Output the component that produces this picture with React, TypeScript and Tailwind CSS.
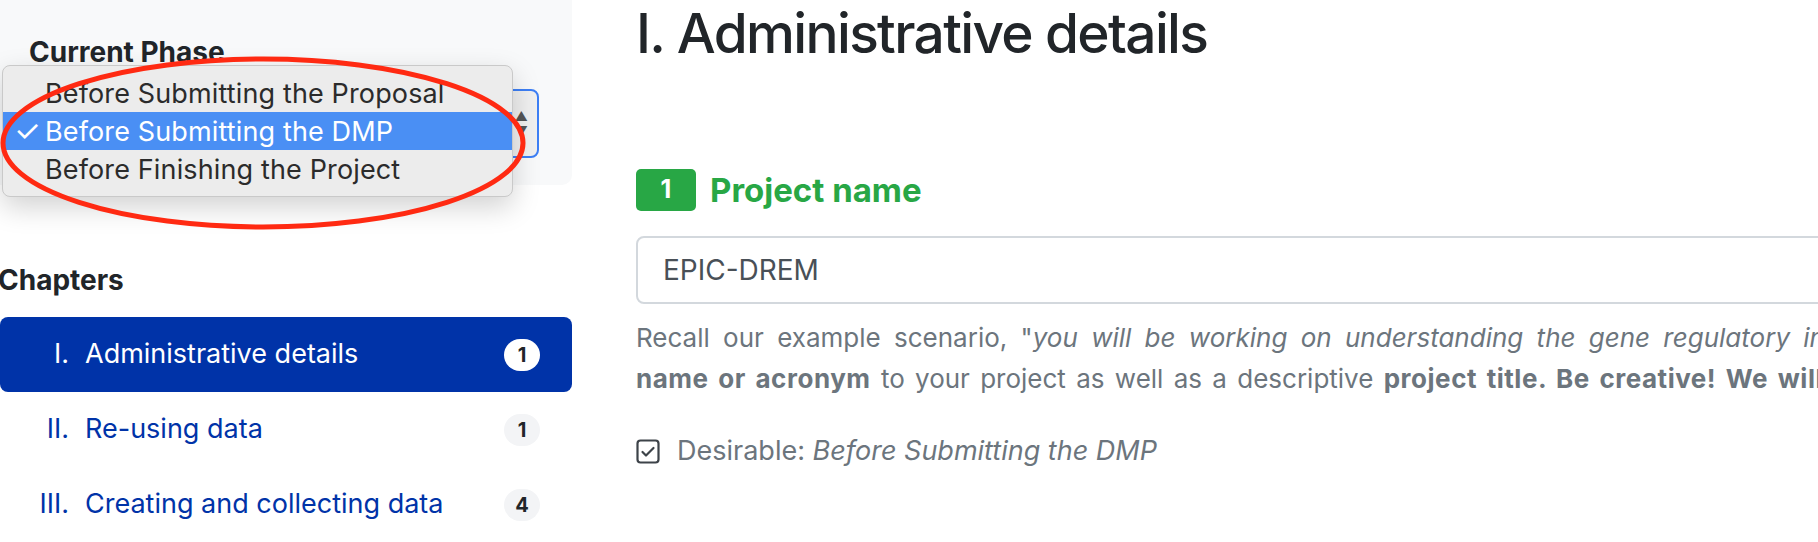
const chapters = [
  { num: 'I.', title: 'Administrative details', count: 1, active: true },
  { num: 'II.', title: 'Re-using data', count: 1, active: false },
  { num: 'III.', title: 'Creating and collecting data', count: 4, active: false },
]

const phases = [
  'Before Submitting the Proposal',
  'Before Submitting the DMP',
  'Before Finishing the Project',
]

function PhaseMenu() {
  // native select popup as drawn by macOS, open over the sidebar
  return (
    <div className="absolute left-[2px] top-[65px] w-[511px] py-[8px] rounded-[8px] bg-[#ececec] border border-[#c9c9c9] shadow-[0_10px_28px_rgba(0,0,0,0.18)]">
      {phases.map((p, i) => {
        const selected = i === 1
        return (
          <div
            key={p}
            className={`relative h-[38px] flex items-center pl-[42px] text-[27px] tracking-[0.005em] leading-none ${
              selected ? 'bg-[#4a8ff4] text-white' : 'text-[#2b2b2b]'
            }`}
          >
            {selected && <span className="absolute left-[11px] top-[3px] text-[30px] leading-[32px]">✓</span>}
            {p}
          </div>
        )
      })}
    </div>
  )
}

function Sidebar() {
  return (
    <aside className="w-[572px] shrink-0 flex flex-col">
      <div className="h-[189px] bg-[#f8f9fa] rounded-br-[10px] pt-[35px] pl-[29px]">
        <div className="text-[28px] leading-[34px] font-bold text-[#212529]">Current Phase</div>
        <div className="mt-[20px] -ml-[4px] w-[514px] h-[69px] rounded-[8px] border-2 border-[#3d7ff5] bg-[#f0f0f0] flex items-center justify-end pr-[9px]">
          <div className="flex flex-col items-center gap-[2px] text-[#555]">
            <span className="text-[13px] leading-none">▲</span>
            <span className="text-[13px] leading-none">▼</span>
          </div>
        </div>
      </div>

      <h3 className="mt-[78px] -ml-[2px] text-[28px] leading-[34px] font-bold text-[#212529]">Chapters</h3>

      <ul className="mt-[20px] flex flex-col">
        {chapters.map((c) => (
          <li
            key={c.num}
            className={`h-[75px] flex items-center rounded-[8px] pr-[32px] text-[27px] ${
              c.active ? 'bg-[#0033a8] text-white' : 'text-[#0033a8]'
            }`}
          >
            <span className="w-[69px] text-right">{c.num}</span>
            <span className="ml-[16px] flex-1">{c.title}</span>
            <span
              className={`h-[32px] min-w-[36px] px-[9px] rounded-full flex items-center justify-center text-[20px] font-bold text-[#212529] ${
                c.active ? 'bg-white' : 'bg-[#f3f4f6]'
              }`}
            >
              {c.count}
            </span>
          </li>
        ))}
      </ul>
    </aside>
  )
}

function CheckSquare() {
  return (
    <svg width="24" height="25" viewBox="0 0 24 25" fill="none" stroke="#3d4349" strokeWidth="2.2">
      <rect x="1.5" y="1.5" width="21" height="22" rx="3" />
      <path d="M6.5 13l3.5 3.5 7.5-7.5" strokeLinecap="round" strokeLinejoin="round" />
    </svg>
  )
}

function Main() {
  return (
    <main className="ml-[64px] w-[1500px] shrink-0">
      <h2 className="text-[55px] leading-[1.2] font-medium tracking-[-0.03em] text-[#212529]">
        I. Administrative details
      </h2>

      <div className="mt-[103px] flex items-center gap-[14px]">
        <span className="w-[60px] h-[42px] rounded-[5px] bg-[#28a745] text-white text-[25px] font-bold flex items-center justify-center">
          1
        </span>
        <span className="text-[33px] leading-[42px] font-bold text-[#28a745]">Project name</span>
      </div>

      <div className="mt-[25px] h-[68px] rounded-[8px] border-2 border-[#d3d8dd] flex items-center pl-[25px] text-[28px] text-[#495057]">
        EPIC-DREM
      </div>

      <div className="mt-[13px] text-[26px] leading-[41px] text-[#6c757d]">
        <div className="whitespace-nowrap [word-spacing:6px]">
          Recall our example scenario, "
          <i>you will be working on understanding the gene regulatory interactions that drive epithelial cells</i>
        </div>
        <div className="whitespace-nowrap [word-spacing:3px]">
          <b className="tracking-[0.02em]">name or acronym</b> to your project as well as a descriptive{' '}
          <b className="tracking-[0.02em]">project title. Be creative! We will use it throughout</b>
        </div>
      </div>

      <div className="mt-[32px] flex items-center gap-[17px] text-[27px] text-[#6c757d]">
        <CheckSquare />
        <span>
          Desirable: <i>Before Submitting the DMP</i>
        </span>
      </div>
    </main>
  )
}

export default function App() {
  return (
    <div className="relative w-[1818px] h-[542px] overflow-hidden bg-white flex font-['Inter','Noto_Sans',sans-serif]">
      <Sidebar />
      <Main />
      <PhaseMenu />
      <svg className="absolute left-0 top-0 pointer-events-none" width="560" height="240">
        <ellipse cx="263" cy="143" rx="260" ry="84" fill="none" stroke="#ff2a12" strokeWidth="5" />
      </svg>
    </div>
  )
}
